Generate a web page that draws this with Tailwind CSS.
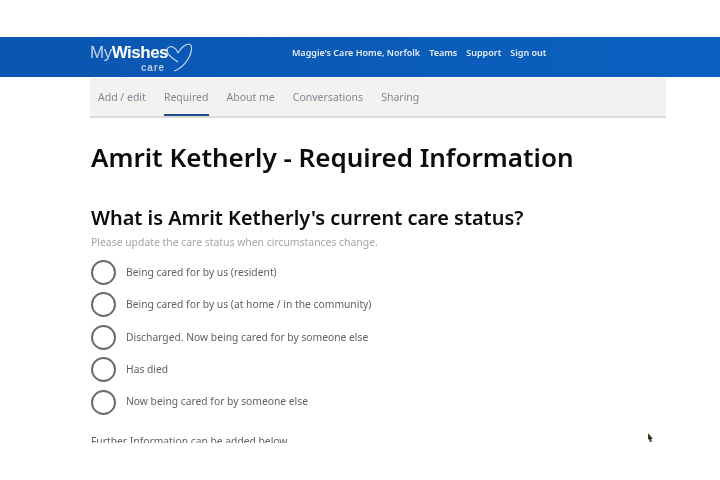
<!DOCTYPE html>
<html lang="en">
<head>
    <meta charset="UTF-8">
    <title>Amrit Ketherly - Required Information</title>
    <script src="https://cdn.jsdelivr.net/npm/@tailwindcss/browser@4"></script>
</head>
<body class="bg-white w-[720px] h-[480px] overflow-hidden relative font-['Noto_Sans',sans-serif] blur-[0.35px]">

<div class="h-[37px]"></div>

<!-- Header -->
<header class="h-[40px] bg-gradient-to-r from-[#0a56b0] to-[#0a60bf] flex text-white">
    <a class="ml-[90px] w-[104px] h-[40px] relative block">
        <svg class="absolute left-[76px] top-[6px] w-[27px] h-[29px]" viewBox="0 0 27 29" fill="none" stroke="#c9d6ec" stroke-width="1.2">
            <path d="M12 19C7 16 1 12 1 7c0-3 4-4 6-3 2 1 4 3 5 6"/>
            <path d="M12 10c2-4 7-9 11-9 4 1 3 9-1 15-3 5-8 10-14 12"/>
        </svg>
        <span class="absolute left-0 top-[6px] text-[17px] leading-[20px] tracking-[-0.5px] font-['Liberation_Sans',sans-serif] text-[#c3d0e8]">My<span class="font-bold text-white">Wishes</span></span>
        <span class="absolute left-[51px] top-[26px] text-[10px] leading-[9px] tracking-[0.8px] font-bold text-[#b9cbe8] font-['Liberation_Sans',sans-serif]">care</span>
    </a>
    <nav class="ml-[98px] flex gap-[9px] h-[31px] items-center text-[9px] font-semibold text-[#e6ecf7]">
        <a>Maggie's Care Home, Norfolk</a>
        <a>Teams</a>
        <a>Support</a>
        <a>Sign out</a>
    </nav>
</header>

<main class="w-[576px] ml-[90px]">
    <!-- Tabs -->
    <nav class="h-[40px] bg-[#f3f2f1] border-b-2 border-[#dcdbd9] mt-[1px] pl-[8px] flex gap-[18px] text-[10.5px] text-[#7f8994]">
        <a class="leading-[38px]">Add / edit</a>
        <a class="leading-[38px] h-[38px] border-b-2 border-[#1d4f8c]">Required</a>
        <a class="leading-[38px]">About me</a>
        <a class="leading-[38px]">Conversations</a>
        <a class="leading-[38px]">Sharing</a>
    </nav>

    <div class="h-[325px] overflow-hidden pl-[1px]">
        <h1 class="mt-[21px] text-[26px] leading-[36px] font-semibold text-[#0b0c0c]">Amrit Ketherly - Required Information</h1>
        <h2 class="mt-[29px] text-[19.9px] leading-[28px] font-semibold text-[#0b0c0c]">What is Amrit Ketherly's current care status?</h2>
        <p class="mt-[3px] text-[10.4px] leading-[14px] text-[#a3a5a6]">Please update the care status when circumstances change.</p>

        <!-- Care status options -->
        <div class="mt-[11px] flex flex-col gap-[7.4px] text-[10.3px] text-[#5f6163]">
            <label class="flex items-center gap-[10px] h-[25px]"><span class="w-[25px] h-[25px] rounded-full border-2 border-[#6b6c6d]"></span>Being cared for by us (resident)</label>
            <label class="flex items-center gap-[10px] h-[25px]"><span class="w-[25px] h-[25px] rounded-full border-2 border-[#6b6c6d]"></span>Being cared for by us (at home / in the community)</label>
            <label class="flex items-center gap-[10px] h-[25px]"><span class="w-[25px] h-[25px] rounded-full border-2 border-[#6b6c6d]"></span>Discharged. Now being cared for by someone else</label>
            <label class="flex items-center gap-[10px] h-[25px]"><span class="w-[25px] h-[25px] rounded-full border-2 border-[#6b6c6d]"></span>Has died</label>
            <label class="flex items-center gap-[10px] h-[25px]"><span class="w-[25px] h-[25px] rounded-full border-2 border-[#6b6c6d]"></span>Now being cared for by someone else</label>
        </div>
        <p class="mt-[19px] text-[10.3px] leading-[14px] text-[#5f6163]">Further Information can be added below</p>
    </div>
</main>

<!-- Mouse pointer -->
<svg class="absolute left-[648px] top-[433px] w-[6px] h-[9px]" viewBox="0 0 6 9"><path d="M0 0l5 6H3l1 3H2L1 6 0 7z" fill="#222" stroke="#e0c060" stroke-width=".4"/></svg>

</body>
</html>
